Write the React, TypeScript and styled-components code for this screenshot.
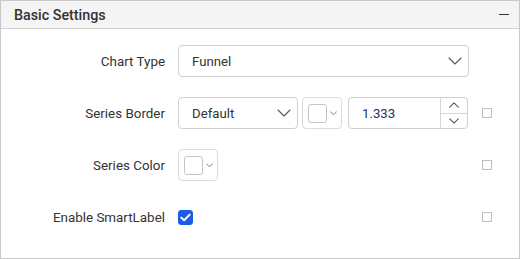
import React, { useState } from 'react';
import styled, { createGlobalStyle } from 'styled-components';

const GlobalStyle = createGlobalStyle`
  html, body {
    margin: 0;
    padding: 0;
    background: #ffffff;
  }
  body {
    font-family: Roboto, "Liberation Sans", Arial, sans-serif;
    color: #333;
  }
  * {
    box-sizing: border-box;
  }
`;

const Chevron: React.FC<{ size?: number; up?: boolean }> = ({ size = 14, up }) => (
  <svg width={size} height={size / 2 + 1} viewBox="0 0 14 8" fill="none">
    <path
      d={up ? 'M1 7 L7 1 L13 7' : 'M1 1 L7 7 L13 1'}
      stroke="#555"
      strokeWidth={size < 12 ? 1.5 : 1.1}
      strokeLinecap="round"
      strokeLinejoin="round"
    />
  </svg>
);

const App: React.FC = () => {
  const [smartLabel, setSmartLabel] = useState<boolean>(true);

  return (
    <>
      <GlobalStyle />
      <Panel>
        <Header>
          <Title>Basic Settings</Title>
          <Collapse />
        </Header>
        <Body>
          <Label>Chart Type</Label>
          <Dropdown width={291}>
            <span>Funnel</span>
            <Chevron />
          </Dropdown>
          <span />

          <Label>Series Border</Label>
          <ControlRow>
            <Dropdown width={120}>
              <span>Default</span>
              <Chevron />
            </Dropdown>
            <ColorPicker>
              <Swatch />
              <Chevron size={7} />
            </ColorPicker>
            <Numeric>
              <NumericValue>1.333</NumericValue>
              <Spinner>
                <SpinButton>
                  <Chevron size={10} up />
                </SpinButton>
                <SpinButton>
                  <Chevron size={10} />
                </SpinButton>
              </Spinner>
            </Numeric>
          </ControlRow>
          <SmallBox />

          <Label>Series Color</Label>
          <ControlRow>
            <ColorPicker>
              <Swatch />
              <Chevron size={7} />
            </ColorPicker>
          </ControlRow>
          <SmallBox />

          <Label>Enable SmartLabel</Label>
          <ControlRow>
            <CheckBox checked={smartLabel} onClick={() => setSmartLabel(!smartLabel)}>
              {smartLabel && (
                <svg width="11" height="9" viewBox="0 0 11 9" fill="none">
                  <path
                    d="M1.3 4.6 L4.1 7.3 L9.7 1.6"
                    stroke="#fff"
                    strokeWidth="2"
                    strokeLinecap="round"
                    strokeLinejoin="round"
                  />
                </svg>
              )}
            </CheckBox>
          </ControlRow>
          <SmallBox />
        </Body>
      </Panel>
    </>
  );
};

const Panel = styled.div`
  width: 520px;
  height: 259px;
  border: 1px solid #c8c8c8;
  background: #fff;
`;

const Header = styled.div`
  height: 28px;
  background: #f4f4f4;
  border-bottom: 1px solid #d2d2d2;
  display: flex;
  align-items: center;
  justify-content: space-between;
  padding: 0 10px 0 13px;
`;

const Title = styled.div`
  font-size: 14.3px;
  font-weight: 500;
  color: #333;
`;

const Collapse = styled.div`
  width: 10px;
  height: 1.5px;
  background: #333;
`;

const Body = styled.div`
  display: grid;
  grid-template-columns: 164px 291px 10px;
  grid-auto-rows: 32px;
  column-gap: 13px;
  row-gap: 20px;
  align-items: center;
  padding-top: 16px;
`;

const Label = styled.div`
  font-size: 13.4px;
  color: #333;
  text-align: right;
`;

const ControlRow = styled.div`
  display: flex;
  align-items: center;
  gap: 4px;
  height: 32px;
`;

const Dropdown = styled.div<{ width: number }>`
  width: ${(p) => p.width}px;
  height: 32px;
  border: 1px solid #cfcfcf;
  border-radius: 4px;
  display: flex;
  align-items: center;
  justify-content: space-between;
  padding: 0 6px 0 13px;
  font-size: 13.2px;
  color: #333;
`;

const ColorPicker = styled.div`
  width: 40px;
  height: 32px;
  border: 1px solid #dcdcdc;
  border-radius: 4px;
  display: flex;
  align-items: center;
  gap: 3px;
  padding-left: 5px;
`;

const Swatch = styled.div`
  width: 19px;
  height: 19px;
  border: 1px solid #c4c4c4;
  border-radius: 3px;
  background: #fff;
`;

const Numeric = styled.div`
  width: 120px;
  height: 32px;
  margin-left: 2px;
  border: 1px solid #cfcfcf;
  border-radius: 4px;
  display: flex;
`;

const NumericValue = styled.div`
  flex: 1;
  display: flex;
  align-items: center;
  padding-left: 13px;
  font-size: 13.2px;
  color: #27325a;
`;

const Spinner = styled.div`
  width: 27px;
  border-left: 1px solid #d6d6d6;
  display: flex;
  flex-direction: column;
`;

const SpinButton = styled.div`
  flex: 1;
  display: flex;
  align-items: center;
  justify-content: center;
  & + & {
    border-top: 1px solid #d6d6d6;
  }
`;

const SmallBox = styled.div`
  width: 10px;
  height: 10px;
  border: 1px solid #bdbdbd;
`;

const CheckBox = styled.div<{ checked: boolean }>`
  width: 15px;
  height: 15px;
  border-radius: 3px;
  background: ${(p) => (p.checked ? '#1a5ce6' : '#fff')};
  border: 1px solid ${(p) => (p.checked ? '#1a5ce6' : '#bdbdbd')};
  display: flex;
  align-items: center;
  justify-content: center;
  cursor: pointer;
`;

export default App;
